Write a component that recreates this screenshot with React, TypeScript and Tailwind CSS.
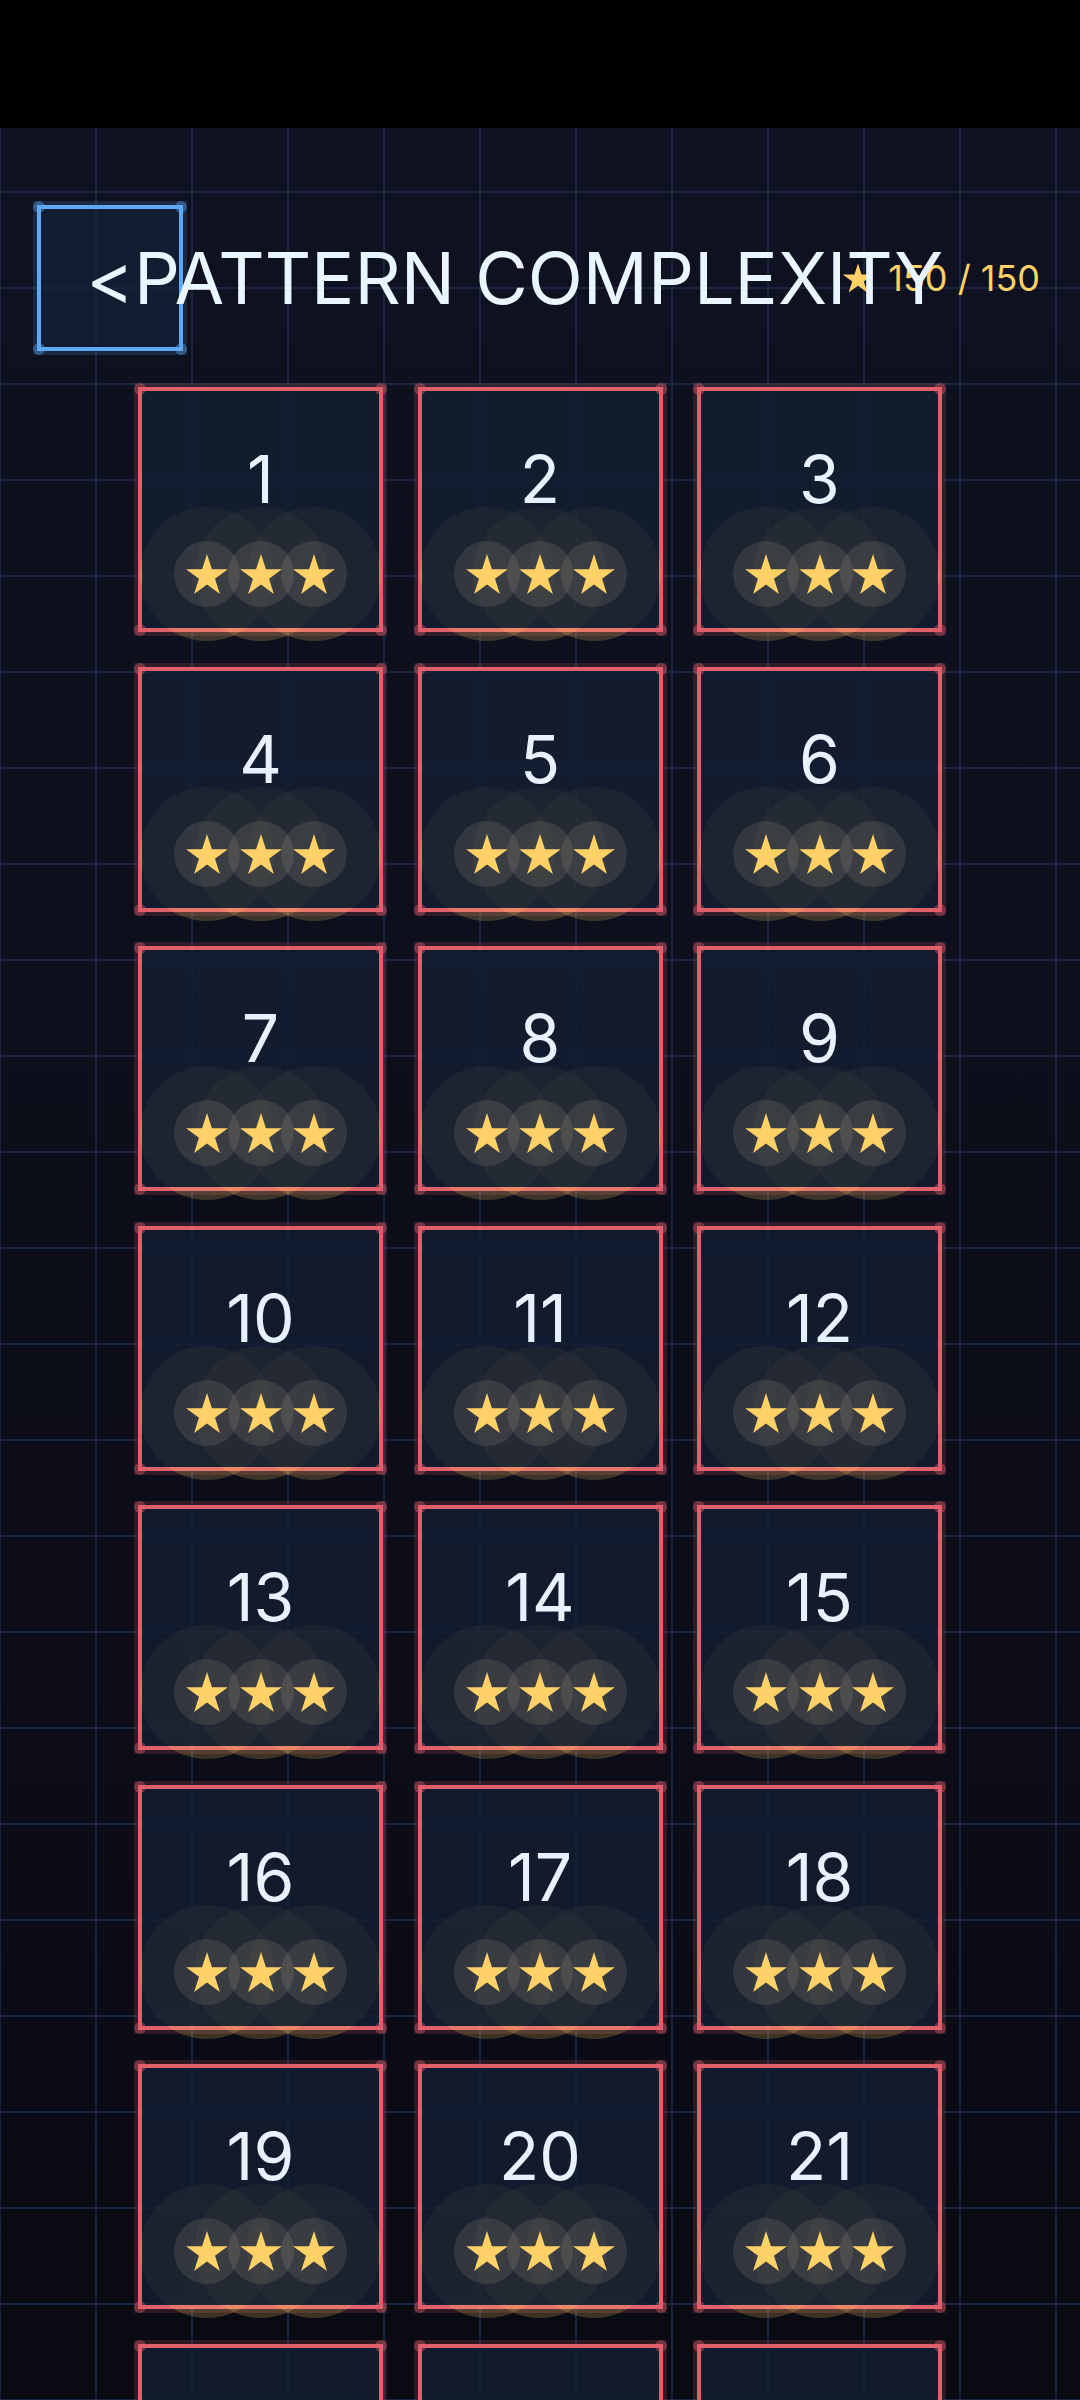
import React from "react";

const STAR_POINTS =
  "12,1.15 14.69,9.44 23.41,9.44 16.36,14.57 19.05,22.86 12,17.74 4.95,22.86 7.64,14.57 0.59,9.44 9.31,9.44";

const StarIcon = ({ className }: { className?: string }) => (
  <svg viewBox="0 0 24 24" className={className}>
    <polygon points={STAR_POINTS} fill="#ffd166" />
  </svg>
);

// glowing corner blobs on the framed boxes
const Corners = ({ color }: { color: string }) => (
  <>
    <span className={`absolute -left-[8px] -top-[8px] h-[12px] w-[12px] rounded-full ${color}`} />
    <span className={`absolute -right-[8px] -top-[8px] h-[12px] w-[12px] rounded-full ${color}`} />
    <span className={`absolute -left-[8px] -bottom-[8px] h-[12px] w-[12px] rounded-full ${color}`} />
    <span className={`absolute -right-[8px] -bottom-[8px] h-[12px] w-[12px] rounded-full ${color}`} />
  </>
);

const LevelCard = ({ level }: { level: number }) => (
  <div className="relative aspect-square border-4 border-[#e0606c] shadow-[0_0_0_4px_rgba(224,96,108,0.17)]">
    <div className="absolute inset-x-0 top-[116px] flex justify-center">
      {[0, 1, 2].map((i) => (
        <span
          key={i}
          className="-mx-[40.25px] h-[134px] w-[134px] shrink-0 rounded-full bg-[#ffd166]/20"
        />
      ))}
    </div>
    <div className="absolute inset-0 bg-[#141f33]/80" />
    <Corners color="bg-[#e0606c]/40" />
    <div className="relative flex flex-col items-center pt-[55px]">
      <span className="text-[66px] leading-none text-[#e8f2ff]">{level}</span>
      <div className="mt-[40px] flex gap-[9.5px]">
        {[0, 1, 2].map((i) => (
          <div key={i} className="relative h-[44px] w-[44px]">
            <span className="absolute -inset-[11px] rounded-full bg-[#fff0c8]/10" />
            <StarIcon className="relative h-[44px] w-[44px]" />
          </div>
        ))}
      </div>
    </div>
  </div>
);

export default function App() {
  const levels = Array.from({ length: 24 }, (_, i) => i + 1);

  return (
    <div className="h-[2400px] overflow-hidden bg-[linear-gradient(to_bottom,#0f1221,#0a0a13)] font-[Inter,'Noto_Sans',sans-serif]">
      <div className="h-full bg-[linear-gradient(to_right,#172540_2px,transparent_2px),linear-gradient(to_bottom,#172540_2px,transparent_2px)] bg-[size:96px_96px] bg-[position:-1px_-1px]">
        <div className="h-[128px] bg-black" />

        <header className="mt-[77px] grid items-center pl-[37px] pr-[40px]">
          <button className="relative col-start-1 row-start-1 flex h-[146px] w-[146px] items-center justify-center justify-self-start border-4 border-[#5fa8f6] bg-[#15223a]/70 text-[72px] leading-none text-[#e8f4ff] shadow-[0_0_0_4px_rgba(96,165,250,0.15)]">
            <Corners color="bg-[#5fa8f6]/40" />
            <span className="relative">&lt;</span>
          </button>
          <div className="col-start-1 row-start-1 flex items-center gap-[14px] justify-self-end text-[36px] leading-none text-[#ffd166]">
            <StarIcon className="h-[32px] w-[32px]" />
            <span>150 / 150</span>
          </div>
          <h1 className="relative z-10 col-start-1 row-start-1 justify-self-center whitespace-nowrap text-[72px] font-normal leading-none text-[#eaf6ff]">
            PATTERN COMPLEXITY
          </h1>
        </header>

        <div className="mx-auto mt-[36px] grid w-[804px] grid-cols-3 gap-[34.5px]">
          {levels.map((n) => (
            <LevelCard key={n} level={n} />
          ))}
        </div>
      </div>
    </div>
  );
}
